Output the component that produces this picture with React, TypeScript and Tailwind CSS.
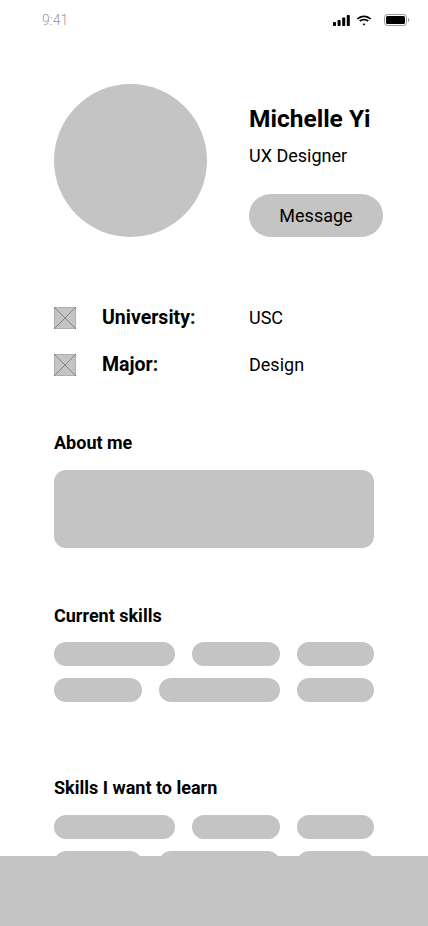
import React from "react";

const Pill = ({ w }: { w: string }) => <div className={`h-[24px] rounded-full bg-[#c4c4c4] ${w}`} />;

const XBox = () => (
  <svg width="22" height="22" viewBox="0 0 22 22" className="shrink-0">
    <rect x="0" y="0" width="22" height="22" fill="#c4c4c4" />
    <rect x="0.25" y="0.25" width="21.5" height="21.5" fill="none" stroke="#9a9a9a" strokeWidth="0.5" />
    <line x1="0" y1="0" x2="22" y2="22" stroke="#555" strokeWidth="0.6" />
    <line x1="22" y1="0" x2="0" y2="22" stroke="#555" strokeWidth="0.6" />
  </svg>
);

const SkillRows = () => (
  <div className="w-[320px] flex flex-col gap-[12px]">
    <div className="flex justify-between">
      <Pill w="w-[121px]" />
      <Pill w="w-[88px]" />
      <Pill w="w-[77px]" />
    </div>
    <div className="flex justify-between">
      <Pill w="w-[88px]" />
      <Pill w="w-[121px]" />
      <Pill w="w-[77px]" />
    </div>
  </div>
);

export default function App() {
  return (
    <div className="relative w-[428px] h-[926px] overflow-hidden bg-white text-black" style={{ fontFamily: "Roboto, 'Noto Sans', sans-serif" }}>
      {/* status bar */}
      <div className="flex items-center justify-between h-[40px] pl-[42px] pr-[18px]">
        <span className="text-[14px] font-light text-[#9a9a9a]">9:41</span>
        <div className="flex items-center gap-[5px]">
          <svg width="17" height="11" viewBox="0 0 17 11">
            <rect x="0" y="7" width="3" height="4" rx="0.7" fill="#000" />
            <rect x="4.6" y="5" width="3" height="6" rx="0.7" fill="#000" />
            <rect x="9.2" y="2.5" width="3" height="8.5" rx="0.7" fill="#000" />
            <rect x="13.8" y="0" width="3" height="11" rx="0.7" fill="#000" />
          </svg>
          <svg width="16" height="11" viewBox="0 0 16 11" className="ml-[1px]">
            <path d="M8 2.2c2.3 0 4.4.9 6 2.4l1.2-1.2C13.3 1.5 10.8.4 8 .4S2.7 1.5.8 3.4L2 4.6c1.6-1.5 3.7-2.4 6-2.4z" fill="#000" />
            <path d="M8 5.4c1.4 0 2.6.5 3.6 1.4l1.2-1.2C11.5 4.4 9.8 3.7 8 3.7s-3.5.7-4.8 1.9l1.2 1.2c1-.9 2.2-1.4 3.6-1.4z" fill="#000" />
            <path d="M8 8.4c.6 0 1.1.2 1.5.6L8 10.6 6.5 9c.4-.4.9-.6 1.5-.6z" fill="#000" />
          </svg>
          <svg width="26" height="12" viewBox="0 0 26 12" className="ml-[7px]">
            <rect x="0.5" y="0.5" width="22" height="11" rx="3" fill="none" stroke="#000" strokeOpacity="0.4" />
            <rect x="2" y="2" width="19" height="8" rx="1.6" fill="#000" />
            <path d="M24 4v4c.8-.3 1.3-1.1 1.3-2s-.5-1.7-1.3-2z" fill="#000" fillOpacity="0.4" />
          </svg>
        </div>
      </div>

      <div className="px-[54px]">
        {/* header */}
        <div className="flex mt-[44px]">
          <div className="w-[153px] h-[153px] rounded-full bg-[#c4c4c4] shrink-0" />
          <div className="ml-[42px] flex flex-col">
            <div className="mt-[21px] text-[24.5px] leading-[28px] font-bold whitespace-nowrap">Michelle Yi</div>
            <div className="mt-[12px] text-[18px] leading-[22px]">UX Designer</div>
            <button className="mt-[27px] w-[134px] h-[43px] rounded-full bg-[#c4c4c4] text-[18px] text-black">Message</button>
          </div>
        </div>

        {/* info */}
        <div className="mt-[70px] flex flex-col gap-[25px]">
          <div className="flex items-center">
            <XBox />
            <span className="ml-[26px] w-[147px] text-[19.5px] font-bold leading-[22px]">University:</span>
            <span className="text-[18px] leading-[22px]">USC</span>
          </div>
          <div className="flex items-center">
            <XBox />
            <span className="ml-[26px] w-[147px] text-[19.5px] font-bold leading-[22px]">Major:</span>
            <span className="text-[18px] leading-[22px]">Design</span>
          </div>
        </div>

        {/* about */}
        <div className="mt-[57px] text-[18px] font-bold leading-[20px]">About me</div>
        <div className="mt-[17px] w-[320px] h-[78px] rounded-[12px] bg-[#c4c4c4]" />

        {/* current skills */}
        <div className="mt-[58px] text-[18px] font-bold leading-[20px]">Current skills</div>
        <div className="mt-[16px]">
          <SkillRows />
        </div>

        {/* skills to learn */}
        <div className="mt-[76px] text-[18px] font-bold leading-[20px]">Skills I want to learn</div>
        <div className="mt-[17px]">
          <SkillRows />
        </div>
      </div>

      {/* bottom bar */}
      <div className="absolute left-0 right-0 bottom-0 h-[70px] bg-[#c4c4c4]" />
    </div>
  );
}
